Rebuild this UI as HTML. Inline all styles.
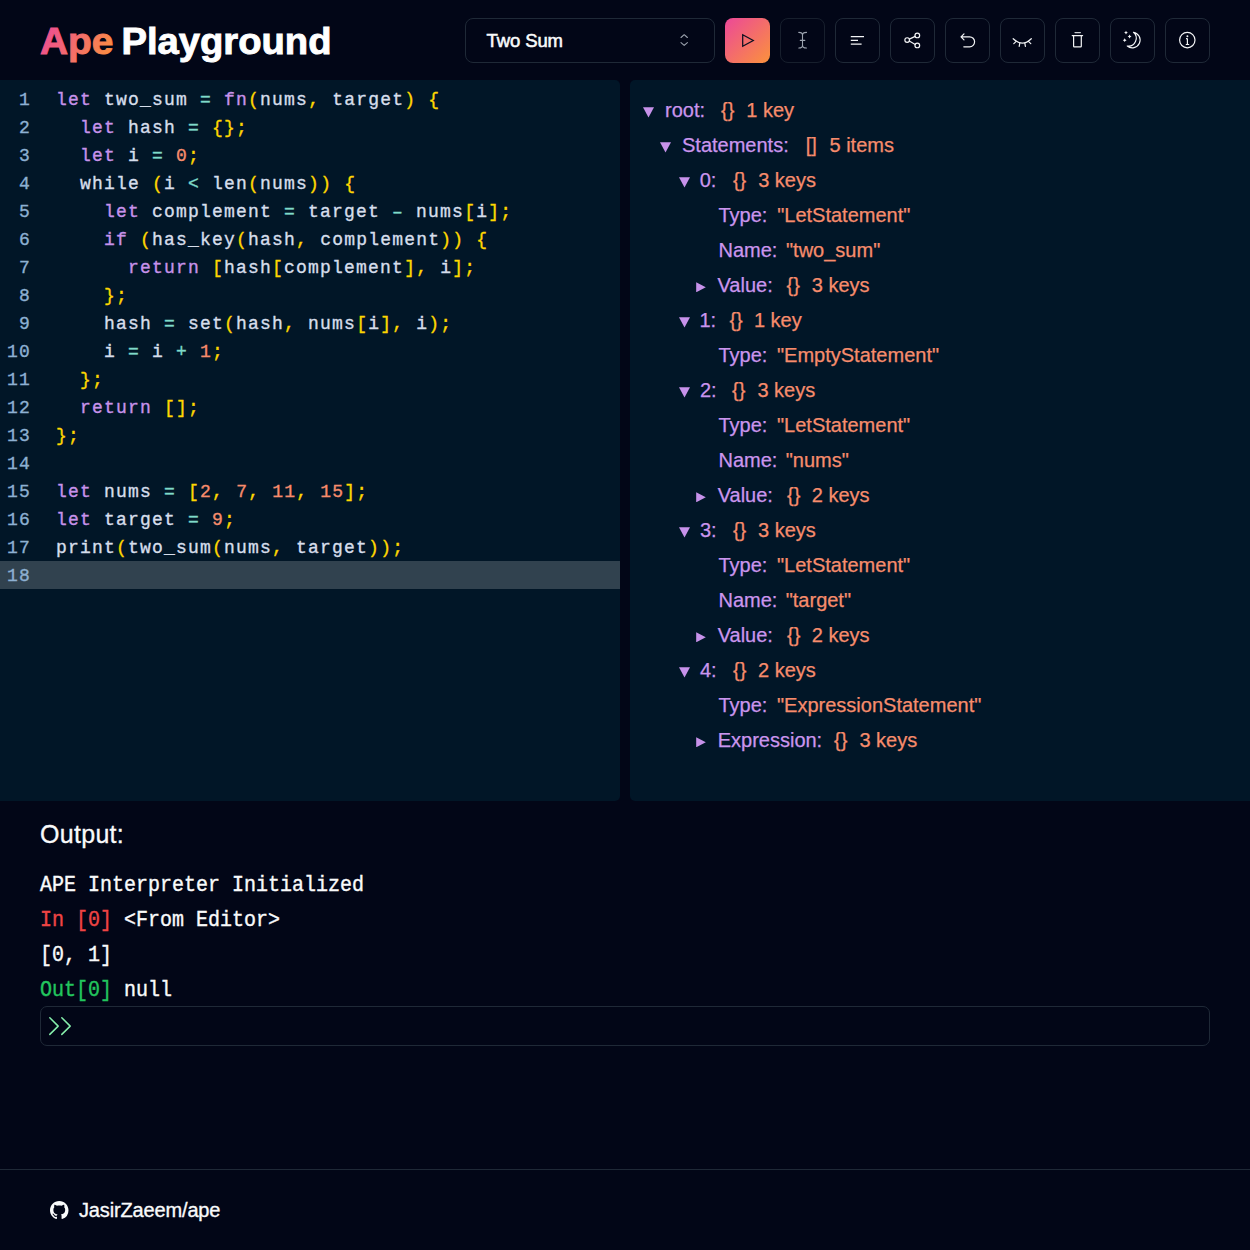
<!DOCTYPE html>
<html><head><meta charset="utf-8">
<style>
*{box-sizing:border-box;margin:0;padding:0}
html,body{width:1250px;height:1250px;overflow:hidden;background:#020617;color:#f9fafb;font-family:"Liberation Sans",sans-serif}
.abs{position:absolute}
#title{position:absolute;left:40px;top:17px;font-weight:bold;font-size:38px;line-height:48px;white-space:nowrap;letter-spacing:-0.3px;-webkit-text-stroke:0.9px #fff}
#title .ape{-webkit-text-stroke:0}
#title .ape{background:linear-gradient(135deg,#ec4899,#fb923c);-webkit-background-clip:text;background-clip:text;color:transparent}
#sel{position:absolute;left:465px;top:18px;width:250px;height:45px;border:1px solid #1f2937;border-radius:8px;background:#020617}
#sel span{position:absolute;left:20.5px;top:10.5px;font-weight:normal;font-size:18.5px;line-height:22px;color:#f9fafb;letter-spacing:-0.1px;-webkit-text-stroke:0.55px #f9fafb}
.btn{position:absolute;top:18px;width:45px;height:45px;border:1px solid #1f2937;border-radius:8px}
.btn svg{position:absolute;left:50%;top:50%;transform:translate(-50%,-50%)}
#play{background:linear-gradient(135deg,#ec4899,#fb923c);border:none}
#editor{position:absolute;left:0;top:80px;width:620px;height:721px;background:#011627;border-radius:0 5px 5px 0}
#tree{position:absolute;left:630px;top:80px;width:620px;height:721px;background:#011627;border-radius:5px 0 0 5px}
.ln{position:absolute;left:0;top:1px;width:31px;text-align:right;color:#8db0d2}
.code{font-family:"Liberation Mono",monospace;font-size:18px;letter-spacing:1.2px;line-height:28px;white-space:pre}
.code span.t,.code span.ln{-webkit-text-stroke:0.35px currentColor}
.row{position:absolute;left:0;width:620px;height:28px}
.act{background:#31424f}
.row .t{position:absolute;left:56px;top:1px;color:#d6deeb}
.k{color:#c792ea}.o{color:#7fdbca}.p{color:#ffd700}.n{color:#f78c6c}
.tr{position:absolute;font-size:20px;line-height:24px;white-space:pre;color:#cb95ee;-webkit-text-stroke:0.25px currentColor}
.tr.v{color:#f78c6c}
.tri{position:absolute;fill:#c792ea}
#out{position:absolute;left:40px;top:819px;font-size:25px;line-height:30px;color:#f9fafb;-webkit-text-stroke:0.3px #f9fafb;letter-spacing:0.3px}
.ol{position:absolute;left:40px;margin-top:1.5px;font-family:"Liberation Mono",monospace;font-size:20px;letter-spacing:0;line-height:24px;white-space:pre;color:#f9fafb;-webkit-text-stroke:0.35px currentColor;transform:scaleY(1.08);transform-origin:0 19px}
#inp{position:absolute;left:40px;top:1006px;width:1170px;height:40px;border:1px solid #1f2937;border-radius:7px}
#foot{position:absolute;left:0;top:1169px;width:1250px;height:1px;background:#1f2937}
#gh{position:absolute;left:79px;top:1198px;font-size:20px;line-height:24px;color:#f9fafb;-webkit-text-stroke:0.35px #f9fafb;letter-spacing:-0.15px}
</style></head><body>
<svg class="abs" style="left:0;top:0" width="400" height="80" viewBox="0 0 400 80">
<defs><linearGradient id="tg" gradientUnits="userSpaceOnUse" x1="40" y1="25" x2="112" y2="62"><stop offset="0" stop-color="#ec4899"/><stop offset="1" stop-color="#fb923c"/></linearGradient></defs>
<text x="40" y="54.3" font-family="Liberation Sans" font-weight="bold" font-size="37" textLength="73.5" lengthAdjust="spacingAndGlyphs" fill="url(#tg)" stroke="url(#tg)" stroke-width="0.9">Ape</text>
<text x="121.5" y="54.3" font-family="Liberation Sans" font-weight="bold" font-size="37" textLength="210" lengthAdjust="spacingAndGlyphs" fill="#ffffff" stroke="#ffffff" stroke-width="0.9">Playground</text>
</svg>
<div id="sel"><span>Two Sum</span></div>
<div class="btn" id="play" style="left:725px"></div>
<div class="btn" style="left:780px;border-color:#171f2d"></div>
<div class="btn" style="left:835px"></div>
<div class="btn" style="left:890px"></div>
<div class="btn" style="left:945px"></div>
<div class="btn" style="left:1000px"></div>
<div class="btn" style="left:1055px"></div>
<div class="btn" style="left:1110px"></div>
<div class="btn" style="left:1165px"></div>
<svg class="abs" style="left:0;top:0" width="1250" height="80" viewBox="0 0 1250 80" fill="none" stroke-linecap="round" stroke-linejoin="round">
<path d="M681 37.5 L684.2 34.7 L687.4 37.5 M681 42.6 L684.2 45.4 L687.4 42.6" stroke="#9ca3af" stroke-width="1.1"/>
<path d="M742.7 34.7 L753.3 40.5 L742.7 46.3 Z" stroke="#0b1020" stroke-width="1.25" stroke-linejoin="miter"/>
<g stroke="#9ca3af" stroke-width="1.1">
<path d="M798.8 32.4 C801 32.4 802.5 33.2 802.5 35.2 C802.5 33.2 804 32.4 806.5 32.4"/>
<path d="M798.8 48 C801 48 802.5 47.2 802.5 45.2 C802.5 47.2 804 48 806.5 48"/>
<path d="M802.5 35 V45.4 M800.3 40.4 H804.8"/>
</g>
<g stroke="#f3f4f6" stroke-width="1.25" stroke-linecap="butt">
<path d="M850.8 36.5 H864 M850.8 40.3 H858 M850.8 44.1 H861.6"/>
</g>
<g stroke="#f3f4f6" stroke-width="1.2">
<circle cx="907.2" cy="40.1" r="2.35"/>
<circle cx="917.3" cy="35.4" r="2.35"/>
<circle cx="917.3" cy="45.4" r="2.35"/>
<path d="M909.3 39.1 L915.2 36.4 M909.3 41.1 L915.2 44.4"/>
</g>
<path d="M964 33.8 L961 36.8 L964 39.8 M961 36.8 H969.6 A5 5 0 0 1 969.6 46.8 H963.8" stroke="#f3f4f6" stroke-width="1.2"/>
<g stroke="#f3f4f6" stroke-width="1.2">
<path d="M1013.2 38.7 Q1022.3 47.5 1031.3 38.7"/>
<path d="M1016.2 41.4 L1013.8 43.6 M1019.8 43.2 L1019.2 46.4 M1024.8 43.2 L1025.4 46.4 M1028.4 41.4 L1030.8 43.6"/>
</g>
<g stroke="#f3f4f6" stroke-width="1.2">
<path d="M1075 32.6 H1080.4" stroke="#c9ccd1"/>
<path d="M1072.2 35.6 H1082.6"/>
<path d="M1073.6 35.6 V46.2 Q1073.6 46.9 1074.3 46.9 H1080.6 Q1081.3 46.9 1081.3 46.2 V35.6"/>
</g>
<g stroke="#f3f4f6" stroke-width="1.2">
<path d="M1133.5 32.3 A7.8 7.8 0 1 1 1127.3 46 A7.85 7.85 0 0 0 1133.5 32.3 Z"/>
</g>
<g fill="#f3f4f6"><path d="M1126 30.700000000000003 Q1126.35 32.25 1127.9 32.6 Q1126.35 32.95 1126 34.5 Q1125.65 32.95 1124.1 32.6 Q1125.65 32.25 1126 30.700000000000003Z"/><path d="M1129.6 34.6 Q1129.9499999999998 36.15 1131.5 36.5 Q1129.9499999999998 36.85 1129.6 38.4 Q1129.25 36.85 1127.6999999999998 36.5 Q1129.25 36.15 1129.6 34.6Z"/><path d="M1124.7 38.300000000000004 Q1125.05 39.85 1126.6000000000001 40.2 Q1125.05 40.550000000000004 1124.7 42.1 Q1124.3500000000001 40.550000000000004 1122.8 40.2 Q1124.3500000000001 39.85 1124.7 38.300000000000004Z"/></g>
<g stroke="#f3f4f6" stroke-width="1.2">
<circle cx="1187.3" cy="40.1" r="7.7"/>
<path d="M1187.4 38.6 V44.4 M1185.8 44.5 H1189.2 M1186 38.7 H1187.4" stroke-linecap="butt"/>
</g>
<circle cx="1187.4" cy="36.2" r="0.95" fill="#f3f4f6"/>
</svg>
<div id="editor">
<div class="row code" style="top:5px"><span class="ln">1</span><span class="t"><span class="k">let</span> two_sum <span class="o">=</span> <span class="k">fn</span><span class="p">(</span>nums<span class="p">,</span> target<span class="p">)</span> <span class="p">{</span></span></div>
<div class="row code" style="top:33px"><span class="ln">2</span><span class="t">  <span class="k">let</span> hash <span class="o">=</span> <span class="p">{</span><span class="p">}</span><span class="p">;</span></span></div>
<div class="row code" style="top:61px"><span class="ln">3</span><span class="t">  <span class="k">let</span> i <span class="o">=</span> <span class="n">0</span><span class="p">;</span></span></div>
<div class="row code" style="top:89px"><span class="ln">4</span><span class="t">  while <span class="p">(</span>i <span class="o">&lt;</span> len<span class="p">(</span>nums<span class="p">)</span><span class="p">)</span> <span class="p">{</span></span></div>
<div class="row code" style="top:117px"><span class="ln">5</span><span class="t">    <span class="k">let</span> complement <span class="o">=</span> target <span class="o">&#8211;</span> nums<span class="p">[</span>i<span class="p">]</span><span class="p">;</span></span></div>
<div class="row code" style="top:145px"><span class="ln">6</span><span class="t">    <span class="k">if</span> <span class="p">(</span>has_key<span class="p">(</span>hash<span class="p">,</span> complement<span class="p">)</span><span class="p">)</span> <span class="p">{</span></span></div>
<div class="row code" style="top:173px"><span class="ln">7</span><span class="t">      <span class="k">return</span> <span class="p">[</span>hash<span class="p">[</span>complement<span class="p">]</span><span class="p">,</span> i<span class="p">]</span><span class="p">;</span></span></div>
<div class="row code" style="top:201px"><span class="ln">8</span><span class="t">    <span class="p">}</span><span class="p">;</span></span></div>
<div class="row code" style="top:229px"><span class="ln">9</span><span class="t">    hash <span class="o">=</span> set<span class="p">(</span>hash<span class="p">,</span> nums<span class="p">[</span>i<span class="p">]</span><span class="p">,</span> i<span class="p">)</span><span class="p">;</span></span></div>
<div class="row code" style="top:257px"><span class="ln">10</span><span class="t">    i <span class="o">=</span> i <span class="o">+</span> <span class="n">1</span><span class="p">;</span></span></div>
<div class="row code" style="top:285px"><span class="ln">11</span><span class="t">  <span class="p">}</span><span class="p">;</span></span></div>
<div class="row code" style="top:313px"><span class="ln">12</span><span class="t">  <span class="k">return</span> <span class="p">[</span><span class="p">]</span><span class="p">;</span></span></div>
<div class="row code" style="top:341px"><span class="ln">13</span><span class="t"><span class="p">}</span><span class="p">;</span></span></div>
<div class="row code" style="top:369px"><span class="ln">14</span><span class="t"></span></div>
<div class="row code" style="top:397px"><span class="ln">15</span><span class="t"><span class="k">let</span> nums <span class="o">=</span> <span class="p">[</span><span class="n">2</span><span class="p">,</span> <span class="n">7</span><span class="p">,</span> <span class="n">11</span><span class="p">,</span> <span class="n">15</span><span class="p">]</span><span class="p">;</span></span></div>
<div class="row code" style="top:425px"><span class="ln">16</span><span class="t"><span class="k">let</span> target <span class="o">=</span> <span class="n">9</span><span class="p">;</span></span></div>
<div class="row code" style="top:453px"><span class="ln">17</span><span class="t">print<span class="p">(</span>two_sum<span class="p">(</span>nums<span class="p">,</span> target<span class="p">)</span><span class="p">)</span><span class="p">;</span></span></div>
<div class="row code act" style="top:481px"><span class="ln">18</span><span class="t"></span></div>
</div>
<div id="tree">
<svg class="tri" style="left:13.0px;top:27.0px" width="11" height="10.5" viewBox="0 0 11 10.5"><path d="M0 0.2H11L5.5 10.4Z"/></svg>
<span class="tr" style="left:35.0px;top:18.0px">root:</span>
<span class="tr v" style="left:91.0px;top:18.0px">{}</span>
<span class="tr v" style="left:116.3px;top:18.0px">1 key</span>
<svg class="tri" style="left:30.0px;top:62.0px" width="11" height="10.5" viewBox="0 0 11 10.5"><path d="M0 0.2H11L5.5 10.4Z"/></svg>
<span class="tr" style="left:52.0px;top:53.0px">Statements:</span>
<span class="tr v" style="left:175.8px;top:53.0px">[]</span>
<span class="tr v" style="left:199.5px;top:53.0px">5 items</span>
<svg class="tri" style="left:48.5px;top:97.0px" width="11" height="10.5" viewBox="0 0 11 10.5"><path d="M0 0.2H11L5.5 10.4Z"/></svg>
<span class="tr" style="left:69.7px;top:88.0px">0:</span>
<span class="tr v" style="left:102.9px;top:88.0px">{}</span>
<span class="tr v" style="left:128.2px;top:88.0px">3 keys</span>
<span class="tr" style="left:88.5px;top:123.0px">Type:</span>
<span class="tr v" style="left:147.2px;top:123.0px">"LetStatement"</span>
<span class="tr" style="left:88.5px;top:158.0px">Name:</span>
<span class="tr v" style="left:156.0px;top:158.0px">"two_sum"</span>
<svg class="tri" style="left:66.0px;top:201.5px" width="10" height="10.5" viewBox="0 0 10 10.5"><path d="M0.2 0.2V10.3L9.8 5.25Z"/></svg>
<span class="tr" style="left:87.5px;top:193.0px">Value:</span>
<span class="tr v" style="left:156.5px;top:193.0px">{}</span>
<span class="tr v" style="left:181.8px;top:193.0px">3 keys</span>
<svg class="tri" style="left:48.5px;top:237.0px" width="11" height="10.5" viewBox="0 0 11 10.5"><path d="M0 0.2H11L5.5 10.4Z"/></svg>
<span class="tr" style="left:69.4px;top:228.0px">1:</span>
<span class="tr v" style="left:99.4px;top:228.0px">{}</span>
<span class="tr v" style="left:123.9px;top:228.0px">1 key</span>
<span class="tr" style="left:88.5px;top:263.0px">Type:</span>
<span class="tr v" style="left:147.0px;top:263.0px">"EmptyStatement"</span>
<svg class="tri" style="left:48.5px;top:307.0px" width="11" height="10.5" viewBox="0 0 11 10.5"><path d="M0 0.2H11L5.5 10.4Z"/></svg>
<span class="tr" style="left:70.0px;top:298.0px">2:</span>
<span class="tr v" style="left:102.0px;top:298.0px">{}</span>
<span class="tr v" style="left:127.4px;top:298.0px">3 keys</span>
<span class="tr" style="left:88.5px;top:333.0px">Type:</span>
<span class="tr v" style="left:147.0px;top:333.0px">"LetStatement"</span>
<span class="tr" style="left:88.5px;top:368.0px">Name:</span>
<span class="tr v" style="left:155.7px;top:368.0px">"nums"</span>
<svg class="tri" style="left:66.0px;top:411.5px" width="10" height="10.5" viewBox="0 0 10 10.5"><path d="M0.2 0.2V10.3L9.8 5.25Z"/></svg>
<span class="tr" style="left:87.7px;top:403.0px">Value:</span>
<span class="tr v" style="left:157.0px;top:403.0px">{}</span>
<span class="tr v" style="left:181.8px;top:403.0px">2 keys</span>
<svg class="tri" style="left:48.5px;top:447.0px" width="11" height="10.5" viewBox="0 0 11 10.5"><path d="M0 0.2H11L5.5 10.4Z"/></svg>
<span class="tr" style="left:70.0px;top:438.0px">3:</span>
<span class="tr v" style="left:102.9px;top:438.0px">{}</span>
<span class="tr v" style="left:128.0px;top:438.0px">3 keys</span>
<span class="tr" style="left:88.5px;top:473.0px">Type:</span>
<span class="tr v" style="left:147.0px;top:473.0px">"LetStatement"</span>
<span class="tr" style="left:88.5px;top:508.0px">Name:</span>
<span class="tr v" style="left:155.7px;top:508.0px">"target"</span>
<svg class="tri" style="left:66.0px;top:551.5px" width="10" height="10.5" viewBox="0 0 10 10.5"><path d="M0.2 0.2V10.3L9.8 5.25Z"/></svg>
<span class="tr" style="left:87.7px;top:543.0px">Value:</span>
<span class="tr v" style="left:157.0px;top:543.0px">{}</span>
<span class="tr v" style="left:181.8px;top:543.0px">2 keys</span>
<svg class="tri" style="left:48.5px;top:587.0px" width="11" height="10.5" viewBox="0 0 11 10.5"><path d="M0 0.2H11L5.5 10.4Z"/></svg>
<span class="tr" style="left:70.0px;top:578.0px">4:</span>
<span class="tr v" style="left:103.0px;top:578.0px">{}</span>
<span class="tr v" style="left:128.0px;top:578.0px">2 keys</span>
<span class="tr" style="left:88.5px;top:613.0px">Type:</span>
<span class="tr v" style="left:147.0px;top:613.0px">"ExpressionStatement"</span>
<svg class="tri" style="left:66.0px;top:656.5px" width="10" height="10.5" viewBox="0 0 10 10.5"><path d="M0.2 0.2V10.3L9.8 5.25Z"/></svg>
<span class="tr" style="left:87.7px;top:648.0px">Expression:</span>
<span class="tr v" style="left:204.0px;top:648.0px">{}</span>
<span class="tr v" style="left:229.4px;top:648.0px">3 keys</span>
</div>
<div id="out">Output:</div>
<div id="inp"></div>
<div class="ol" style="top:872px">APE Interpreter Initialized</div>
<div class="ol" style="top:907px"><span style="color:#ef4444">In [0]</span> &lt;From Editor&gt;</div>
<div class="ol" style="top:942px">[0, 1]</div>
<div class="ol" style="top:977px"><span style="color:#22c55e">Out[0]</span> null</div>
<svg class="abs" style="left:0;top:1000px" width="100" height="50" viewBox="0 1000 100 50" fill="none" stroke="#86efac" stroke-width="1.5" stroke-linecap="round" stroke-linejoin="round"><path d="M49.8 1017.8 L58.2 1026.1 L49.8 1034.4 M61.8 1017.8 L70.2 1026.1 L61.8 1034.4"/></svg>
<svg class="abs" style="left:50px;top:1201px" width="18.5" height="18.5" viewBox="0 0 16 16" fill="#f9fafb"><path d="M8 0C3.58 0 0 3.58 0 8c0 3.54 2.29 6.53 5.470 7.59.4.07.55-.17.55-.38 0-.19-.01-.82-.01-1.49-2.01.37-2.53-.49-2.69-.94-.09-.23-.48-.94-.82-1.13-.28-.15-.68-.52-.01-.53.63-.01 1.08.58 1.23.82.72 1.21 1.870.87 2.330.66.07-.52.28-.87.51-1.07-1.78-.2-3.64-.89-3.64-3.95 0-.87.31-1.59.82-2.15-.08-.2-.36-1.02.08-2.12 0 0 .67-.21 2.2.82.64-.18 1.32-.27 2-.27.68 0 1.36.09 2 .27 1.53-1.04 2.2-.82 2.2-.82.44 1.1.16 1.92.08 2.12.51.56.82 1.27.82 2.15 0 3.07-1.87 3.75-3.65 3.95.29.25.54.73.54 1.48 0 1.07-.01 1.93-.01 2.2 0 .21.15.46.55.38A8.013 8.013 0 0016 8c0-4.42-3.58-8-8-8z"/></svg>
<div id="foot"></div>
<div id="gh">JasirZaeem/ape</div>
</body></html>
